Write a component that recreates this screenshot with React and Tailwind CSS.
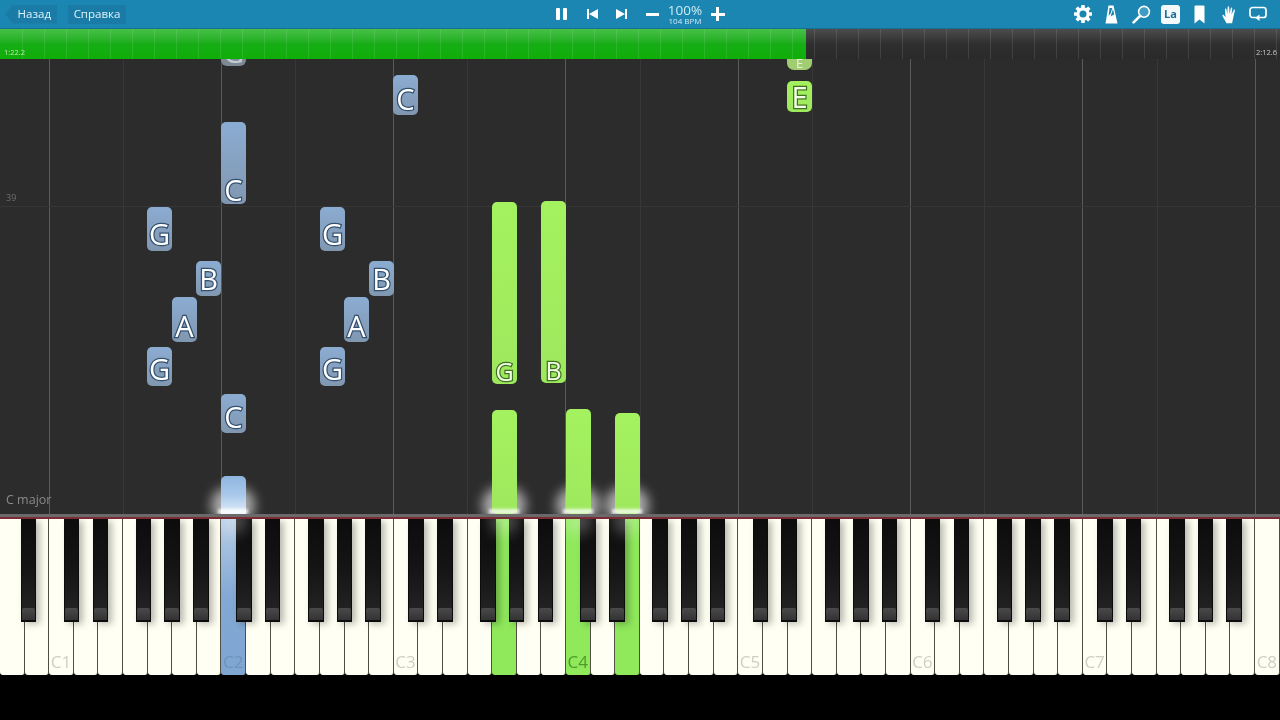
import React from "react";

// blue = left hand, green = right hand
const notes = [
  { x: 221, top: 0, h: 7, c: "gray", l: "G" },
  { x: 393, top: 16, h: 40, c: "blue", l: "C", pb: 2 },
  { x: 221, top: 63, h: 82, c: "blue", l: "C" },
  { x: 147, top: 148, h: 44, c: "blue", l: "G", pb: 3 },
  { x: 196, top: 202, h: 35, c: "blue", l: "B", pb: 3 },
  { x: 172, top: 238, h: 45, c: "blue", l: "A", pb: 2 },
  { x: 147, top: 288, h: 39, c: "blue", l: "G", pb: 3 },
  { x: 320, top: 148, h: 44, c: "blue", l: "G", pb: 3 },
  { x: 369, top: 202, h: 35, c: "blue", l: "B", pb: 3 },
  { x: 344, top: 238, h: 45, c: "blue", l: "A", pb: 2 },
  { x: 320, top: 288, h: 39, c: "blue", l: "G", pb: 3 },
  { x: 221, top: 335, h: 39, c: "blue", l: "C", pb: 2 },
  { x: 221, top: 417, h: 38, c: "lit" },
  { x: 787, top: 0, h: 11, c: "pale", l: "E" },
  { x: 787, top: 22, h: 31, c: "green", l: "E", pb: 1 },
  { x: 492, top: 143, h: 182, c: "green", l: "G", small: true },
  { x: 541, top: 142, h: 182, c: "green", l: "B", small: true },
  { x: 492, top: 351, h: 104, c: "green" },
  { x: 566, top: 350, h: 105, c: "green" },
  { x: 615, top: 354, h: 101, c: "green" },
];

const noteStyles = {
  blue: "text-[29px] bg-gradient-to-b from-[#8bacd2] to-[#8197b0] rounded-[5px] text-white [-webkit-text-stroke:2.5px_#33506f] [paint-order:stroke_fill]",
  green: "text-[29px] bg-gradient-to-b from-[#a4f25f] to-[#9ee85e] rounded-[5px] text-[#f4ffe8] [-webkit-text-stroke:2.5px_#3f7220] [paint-order:stroke_fill]",
  gray: "text-[29px] overflow-hidden bg-[#7d8a95] rounded-b-[6px] text-[#c4ccd2]",
  pale: "text-[13px] overflow-hidden bg-[#a2cc72] rounded-b-[7px] text-[#e6f4d2]",
  lit: "bg-gradient-to-b from-[#8fb5e0] via-[#a9c8ea] to-[#e4eff9] rounded-t-[5px]",
};

const octaveLines = [49, 221, 393, 565, 738, 910, 1082, 1255];
const faintLines = [123, 295, 467, 640, 812, 984, 1157];
const ticks = Array.from({ length: 58 }, (_, i) => 22 + i * 22);

const whiteKeys = Array.from({ length: 52 }, (_, i) => i);
const activeKeys = { 9: "blue", 20: "green", 23: "green", 25: "green" };
const labels = { 2: "C1", 9: "C2", 16: "C3", 23: "C4", 30: "C5", 37: "C6", 44: "C7", 51: "C8" };

// offsets of the black keys inside one octave, from C
const blackOffsets = [14.6, 43.4, 86.6, 115.2, 143.9];
const blackKeys = [20.8];
for (let o = 0; o < 7; o++) {
  blackOffsets.forEach((b) => blackKeys.push(49.2 + o * 172.2 + b));
}

const glows = [233, 504, 578, 627];

const Note = ({ note }) => (
  <div
    className={`absolute w-[25px] flex items-end justify-center font-["Open_Sans",sans-serif] leading-none ${noteStyles[note.c]} ${
      note.small ? "!text-[25px]" : ""
    }`}
    style={{ left: note.x, top: note.top, height: note.h, paddingBottom: note.pb || 0 }}
  >
    {note.l}
  </div>
);

const Sep = () => <div className="w-px h-full bg-[#2b7ea3]" />;

const Gear = () => (
  <svg width="18" height="18" viewBox="0 0 20 20">
    <g fill="#fff">
      {[0, 45, 90, 135].map((a) => (
        <rect key={a} x="8" y="0" width="4" height="20" rx="0.6" transform={`rotate(${a} 10 10)`} />
      ))}
      <circle cx="10" cy="10" r="7.4" />
    </g>
    <circle cx="10" cy="10" r="3.9" fill="#1a86b0" />
  </svg>
);

const Metronome = () => (
  <svg width="13" height="19" viewBox="0 0 13 19">
    <path d="M3.5 0.5h5l4 18H0.5z" fill="#fff" />
    <path d="M4.5 3h2.8L5.6 8.6 3.6 11z" fill="#1a86b0" />
    <path d="M8 4L9.2 9.5 5.6 11.5z" fill="#1a86b0" />
  </svg>
);

const Lens = () => (
  <svg width="19" height="19" viewBox="0 0 19 19" fill="none">
    <circle cx="12" cy="6.8" r="5.4" stroke="#fff" strokeWidth="1.6" fill="#3f9cc2" />
    <path d="M8 11L1.6 17.4" stroke="#fff" strokeWidth="2.6" strokeLinecap="round" />
  </svg>
);

const Bookmark = () => (
  <svg width="11" height="19" viewBox="0 0 11 19">
    <path d="M1.5 0.5h8a1 1 0 0 1 1 1V18.5L5.5 14.5 0.5 18.5V1.5a1 1 0 0 1 1-1z" fill="#fff" />
  </svg>
);

const Hand = () => (
  <svg width="15" height="19" viewBox="0 0 17 20">
    <path
      d="M5 20C4 17 1.5 14 .6 11.6c-.4-1 .9-1.7 1.6-.8L4 13 3.4 4c0-1 1.4-1.1 1.6 0L6 9.5 6.4 1.5c.1-1.1 1.6-1.1 1.7 0L8.6 9.5 10 2.6c.2-1 1.7-.8 1.6.3L10.8 10l2.4-5.2c.4-.9 1.7-.4 1.4.6L13 12.5c-.4 3-1.4 5-1.4 7.5z"
      fill="#fff"
    />
  </svg>
);

const Loop = () => (
  <svg width="18" height="16" viewBox="0 0 18 16" fill="none">
    <path d="M7 11.5H3.5A2.5 2.5 0 0 1 1 9V4a2.500 2.500 0 0 1 2.500-2.500h11A2.500 2.500 0 0 1 17 4v5a2.500 2.500 0 0 1-2.500 2.500H9" stroke="#fff" strokeWidth="1.7" />
    <path d="M10.500 8.500v6.500L6 11.700z" fill="#fff" />
  </svg>
);

function LaBox() {
  return (
    <div className='w-[19px] h-[19px] bg-[#f4fafc] rounded-[3px] text-[#1b6f94] text-[11px] font-bold flex items-center justify-center font-["Open_Sans",sans-serif]'>
      La
    </div>
  );
}

const TopBar = () => (
  <div className='h-[29px] bg-[#1b86b1] border-b border-[#167096] flex items-center font-["Open_Sans",sans-serif] text-[#dff3fb] relative'>
    <div className="w-[545px] flex items-center h-full pl-[5px] text-[11.5px]">
      <div className="h-[19px] w-[52px] bg-[#1a7ca6] flex items-center justify-end pr-[6px] [clip-path:polygon(8px_0,100%_0,100%_100%,8px_100%,0_50%)]">
        Назад
      </div>
      <div className="h-[19px] w-[58px] ml-[11px] bg-[#1a7ca6] flex items-center justify-center">Справка</div>
    </div>
    <Sep />
    <div className="w-[31px] h-full flex items-center justify-center">
      <div className="flex gap-[3px]">
        <div className="w-[4px] h-[12px] bg-white rounded-[1px]" />
        <div className="w-[4px] h-[12px] bg-white rounded-[1px]" />
      </div>
    </div>
    <Sep />
    <div className="w-[59px] h-full flex items-center pl-[9px] gap-[18px]">
      <svg width="11" height="10" viewBox="0 0 11 10" fill="#fff">
        <rect x="0" y="0" width="2" height="10" />
        <path d="M11 0v10L2 5z" />
      </svg>
      <svg width="11" height="10" viewBox="0 0 11 10" fill="#fff">
        <rect x="9" y="0" width="2" height="10" />
        <path d="M0 0v10l9-5z" />
      </svg>
    </div>
    <Sep />
    <div className="w-[95px] h-full flex items-center justify-between pl-[8px] pr-[8px]">
      <div className="w-[13px] h-[3px] bg-white" />
      <div className="flex flex-col items-center">
        <span className="text-[13.5px] leading-[12px] text-[#cfeaf5]">100%</span>
        <span className="text-[8px] leading-[9px] text-[#cfeaf5]">104 BPM</span>
      </div>
      <div className="relative w-[14px] h-[14px]">
        <div className="absolute left-0 top-[5.5px] w-[14px] h-[3px] bg-white" />
        <div className="absolute top-0 left-[5.5px] w-[3px] h-[14px] bg-white" />
      </div>
    </div>
    <Sep />
    <div className="flex-1 h-full flex items-center justify-end pr-[7px]">
      {[<Gear />, <Metronome />, <Lens />, <LaBox />, <Bookmark />, <Hand />, <Loop />].map((icon, i) => (
        <div key={i} className="w-[29.3px] flex items-center justify-center">
          {icon}
        </div>
      ))}
    </div>
  </div>
);

const Timeline = () => (
  <div className="h-[30px] relative bg-gradient-to-b from-[#4c4c4c] via-[#2f2f2f] to-[#2a2a2a] font-['Open_Sans',sans-serif] text-[7.5px]">
    <div className="absolute left-0 top-0 h-full w-[806px] bg-gradient-to-b from-[#46c046] via-[#16ad16] to-[#0fae06]" />
    {ticks.map((x) => (
      <div key={x} className="absolute top-0 h-full w-px bg-white/10" style={{ left: x }} />
    ))}
    <span className="absolute left-[4px] bottom-[1px] text-[#bfe8b5]">1:22.2</span>
    <span className="absolute right-[3px] bottom-[1px] text-[#c8c8c8]">2:12.6</span>
  </div>
);

const Roll = () => (
  <div className="h-[455px] relative bg-[#2c2c2c] overflow-hidden">
    {faintLines.map((x) => (
      <div key={x} className="absolute top-0 h-full w-px bg-[#383838]" style={{ left: x }} />
    ))}
    {octaveLines.map((x) => (
      <div key={x} className="absolute top-0 h-full w-px bg-[#5a5a5a]" style={{ left: x }} />
    ))}
    <div className="absolute left-0 right-0 top-[147px] h-px bg-[#363636]" />
    <span className="absolute left-[6px] top-[132px] text-[9px] text-[#6e6e6e] font-['Open_Sans',sans-serif]">39</span>
    {glows.map((x) => (
      <div key={x} className="absolute top-[428px] w-[44px] h-[36px] rounded-full bg-white/60 blur-[6px]" style={{ left: x - 22 }} />
    ))}
    {notes.map((n, i) => (
      <Note key={i} note={n} />
    ))}
    {glows.map((x) => (
      <div key={x} className="absolute top-[450px] h-[5px] w-[30px] bg-white/80 blur-[1.5px]" style={{ left: x - 15 }} />
    ))}
    <span className="absolute left-[6px] top-[432px] text-[12.5px] text-[#8a8a8a] font-['Open_Sans',sans-serif]">C major</span>
  </div>
);

const Keyboard = () => (
  <div className="h-[156px] relative flex overflow-hidden font-['Open_Sans',sans-serif]">
    {whiteKeys.map((i) => {
      const active = activeKeys[i];
      return (
        <div
          key={i}
          className={`h-full flex-1 flex items-end justify-center pb-[5px] text-[17px] leading-none rounded-b-[3px] border-r-[1.5px] border-[#4f4f44] ${
            active === "blue"
              ? "bg-gradient-to-b from-[#b5cde6] via-[#82a8d4] to-[#7fa6d2] text-[#6f93bb]"
              : active === "green"
                ? "bg-[#8fe95b] text-[#4f9a2a]"
                : "bg-[#fffff3] text-[#cfcfc4]"
          }`}
        >
          {labels[i]}
        </div>
      );
    })}
    {blackKeys.map((x) => (
      <div
        key={x}
        className="absolute top-0 h-[103px] w-[15.5px] bg-gradient-to-b from-[#0c0c0c] via-[#151515] to-[#262626] border border-[#0c0c0c] border-b-2 shadow-[4px_2px_7px_rgba(0,0,0,0.28)] flex flex-col justify-end"
        style={{ left: x }}
      >
        <div className="h-[12px] bg-gradient-to-b from-[#4a4a4a] to-[#333333] rounded-t-[2px]" />
      </div>
    ))}
    {glows.map((x) => (
      <div key={x} className="absolute -top-[14px] w-[30px] h-[30px] rounded-full bg-white/25 blur-[7px]" style={{ left: x - 15 }} />
    ))}
  </div>
);

export default function App() {
  return (
    <div className="w-[1280px] h-[720px] bg-black flex flex-col overflow-hidden blur-[0.4px]">
      <TopBar />
      <Timeline />
      <Roll />
      <div className="h-[5px] bg-[#6a6a6a] border-b-2 border-[#7c2a33]" />
      <Keyboard />
    </div>
  );
}
